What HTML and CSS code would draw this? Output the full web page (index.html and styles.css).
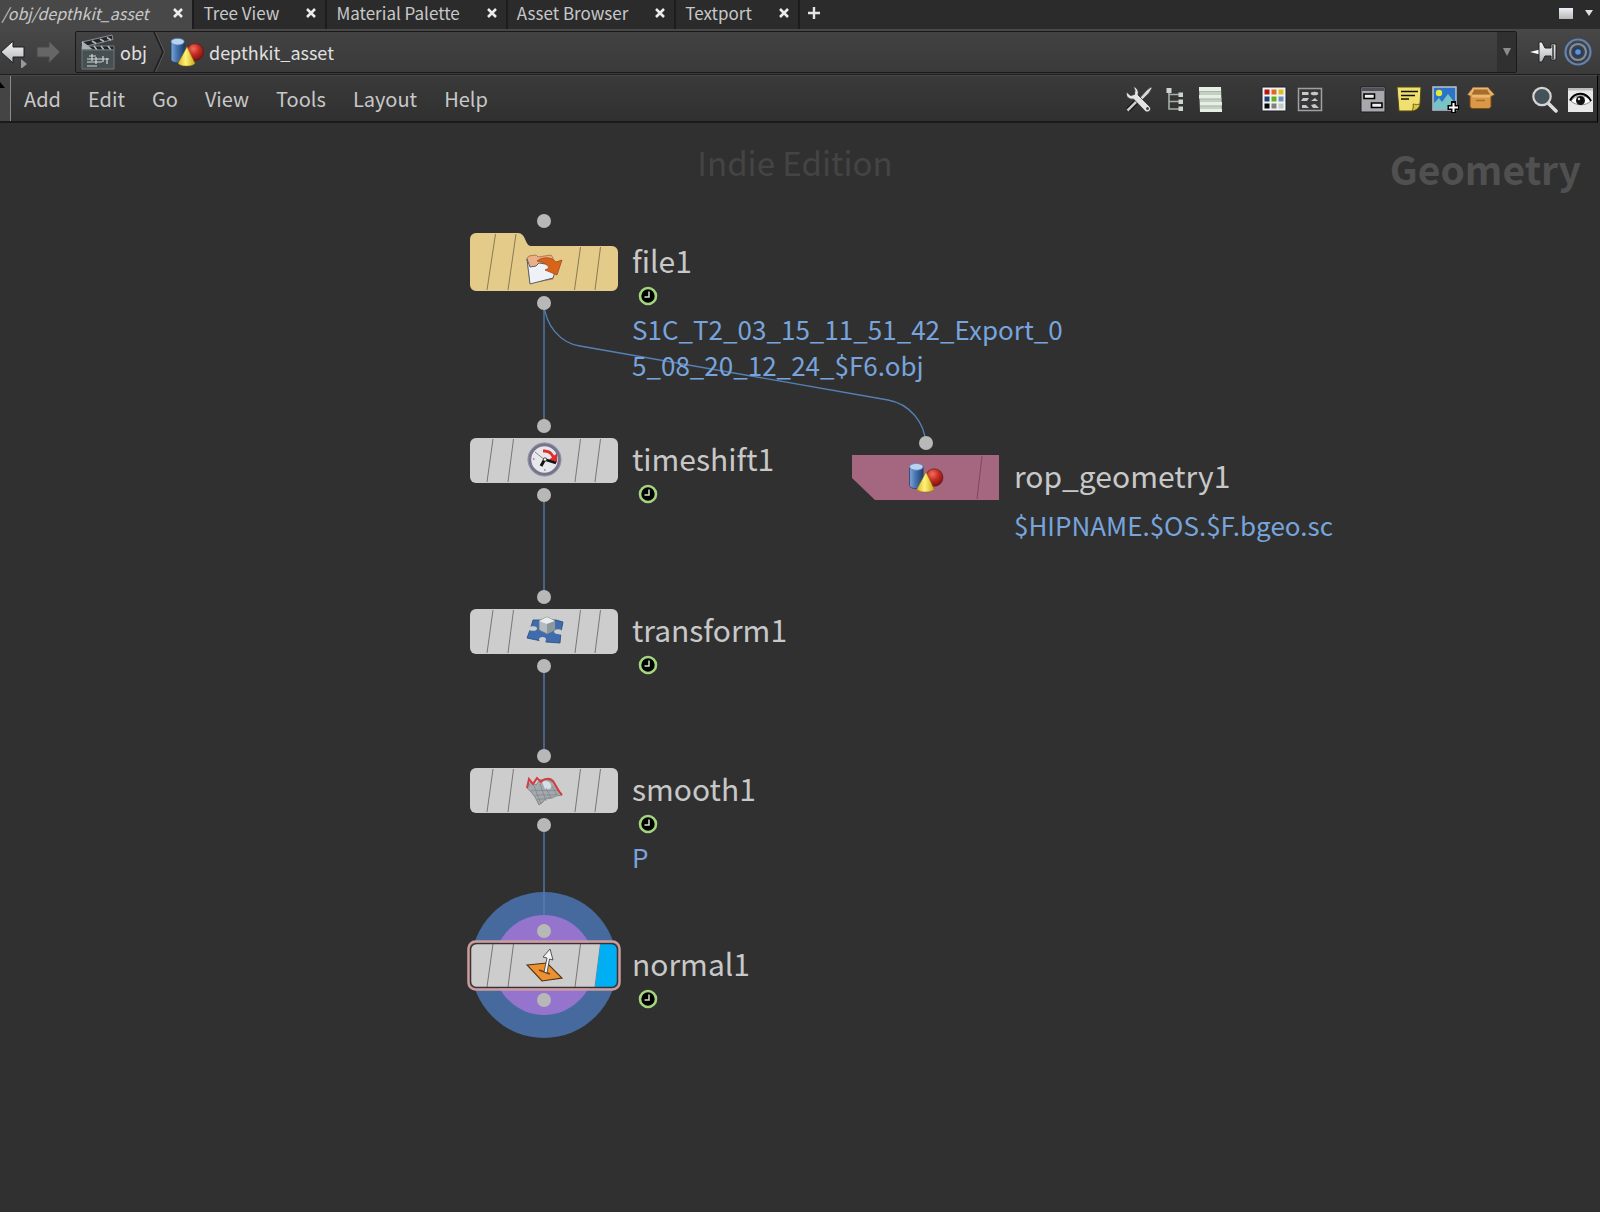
FILE: index.html
```html
<!DOCTYPE html>
<html lang="en">
<head>
    <meta charset="UTF-8">
    <title>/obj/depthkit_asset</title>
    <link rel="stylesheet" href="styles.css">
</head>

<body>
<!-- shared icons -->
<svg class="defs" aria-hidden="true">
    <defs>
        <linearGradient id="gBlue" x1="0" x2="1" y1="0" y2="0">
            <stop offset="0" stop-color="#7fa8d8"/>
            <stop offset=".4" stop-color="#4a78b4"/>
            <stop offset="1" stop-color="#1d3f70"/>
        </linearGradient>
        <linearGradient id="gYellow" x1="0" x2="1" y1="0" y2="0">
            <stop offset="0" stop-color="#d8b820"/>
            <stop offset=".45" stop-color="#fff27a"/>
            <stop offset="1" stop-color="#d0a818"/>
        </linearGradient>
        <radialGradient id="gRed" cx=".4" cy=".3" r=".7">
            <stop offset="0" stop-color="#f0705c"/>
            <stop offset=".5" stop-color="#c62c24"/>
            <stop offset="1" stop-color="#801410"/>
        </radialGradient>
        <linearGradient id="gSilver" x1="0" x2="0" y1="0" y2="1">
            <stop offset="0" stop-color="#f4f4f4"/>
            <stop offset="1" stop-color="#b4b8bc"/>
        </linearGradient>
        <symbol id="shapes" viewBox="0 0 36 32">
            <path d="M1 5v19c0 2 3 3.500 7 3.500s7-1.500 7-3.500V5z" fill="url(#gBlue)" stroke="#1f3c66" stroke-width=".8"/>
            <ellipse cx="8" cy="5" rx="7" ry="3.500" fill="#b9d2ee" stroke="#5b82b4" stroke-width=".8"/>
            <circle cx="26.500" cy="16" r="9" fill="url(#gRed)" stroke="#5c100c" stroke-width=".6"/>
            <path d="M18 10.500L8.500 28c2 4 16 4 18 0z" fill="url(#gYellow)" stroke="#8c7010" stroke-width=".6"/>
        </symbol>
        <symbol id="badge" viewBox="0 0 20 20">
            <circle cx="10" cy="10" r="8" fill="#000" stroke="#a6d47e" stroke-width="2.600"/>
            <path d="M11 5.500V11H6.500" fill="none" stroke="#d0e8c0" stroke-width="1.500"/>
        </symbol>
        <symbol id="cross" viewBox="0 0 10 10">
            <path d="M1 1l8 8M9 1l-8 8" stroke="#ececec" stroke-width="2.500"/>
        </symbol>
        <symbol id="plate" viewBox="0 0 148 45">
            <rect width="148" height="45" rx="6" fill="#cdcdcd"/>
            <path d="M23 1l-6 43M43.500 1l-5.500 43M110.500 1l-5.500 43M130.500 1l-5.500 43" stroke="#77777a" stroke-width="1"/>
        </symbol>
    </defs>
</svg>

<div class="pane">
    <div class="tabs">
        <div class="tab active">
            <a href="#network">/obj/depthkit_asset</a>
            <button class="close" aria-label="Close"><svg width="10" height="10"><use href="#cross"/></svg></button>
        </div>
        <div class="tab">
            <a href="#tree">Tree View</a>
            <button class="close" aria-label="Close"><svg width="10" height="10"><use href="#cross"/></svg></button>
        </div>
        <div class="tab">
            <a href="#material">Material Palette</a>
            <button class="close" aria-label="Close"><svg width="10" height="10"><use href="#cross"/></svg></button>
        </div>
        <div class="tab">
            <a href="#assets">Asset Browser</a>
            <button class="close" aria-label="Close"><svg width="10" height="10"><use href="#cross"/></svg></button>
        </div>
        <div class="tab">
            <a href="#textport">Textport</a>
            <button class="close" aria-label="Close"><svg width="10" height="10"><use href="#cross"/></svg></button>
        </div>
        <button class="new-tab" aria-label="New tab"><svg width="12" height="12"><path d="M6 0v12M0 6h12" stroke="#e4e4e4" stroke-width="2.400"/></svg></button>
        <div class="window-tools">
            <button aria-label="Maximize pane"><svg width="14" height="12"><path d="M0 0h14v12H0z" fill="url(#gSilver)"/><path d="M0 0h14" stroke="#28284a" stroke-width="2"/></svg></button>
            <button aria-label="Pane menu"><svg width="8" height="6"><path d="M0 0h8L4 6z" fill="#e0e0e0"/></svg></button>
        </div>
    </div>

    <div class="path-bar">
        <button class="nav" aria-label="Back">
            <svg width="28" height="32">
                <path d="M1 16L13 5v6h11v10H13v6z" fill="url(#gSilver)" stroke="#1c1c22" stroke-width="1"/>
                <path d="M21 23l6 5-6 5z" fill="#999"/>
            </svg>
        </button>
        <button class="nav" aria-label="Forward">
            <svg width="28" height="32"><path d="M26 16L15 5v6H3v10h12v6z" fill="#666" stroke="#484848" stroke-width="1"/></svg>
        </button>
        <div class="path">
            <a href="#obj" class="crumb">
                <svg width="34" height="36" viewBox="0 0 34 36">
                    <path d="M1 8L31 1l1 4.500L2 13z" fill="#22262a" stroke="#8a9094" stroke-width="1"/>
                    <path d="M11 7l4 2.500M19 5l4 2.500M26 3.500l4 2.500" stroke="#b8bcbc" stroke-width="1.500"/>
                    <path d="M1 12h32v4H1z" fill="#1e2224" stroke="#7a8084" stroke-width="1"/>
                    <path d="M13 12l3 4M20 12l3 4M27 12l3 4" stroke="#b8bcbc" stroke-width="1.500"/>
                    <path d="M1 7l11 8.500H1z" fill="#a8b0b4"/>
                    <path d="M1 16h32v19H1z" fill="#465052" stroke="#6c7678" stroke-width="1"/>
                    <path d="M6 25h22M6 28h15M6 32h10M11 20v7M15 23v7M22 22v6M26 24v6M8 22h7" stroke="#d0d6d6" stroke-width="1.200"/>
                </svg>
                obj
            </a>
            <svg class="chevron" width="12" height="40"><path d="M1 0l9 20-9 20" fill="none" stroke="#1c1c1c" stroke-width="1.500"/><path d="M2.500 0l9 20-9 20" fill="none" stroke="#585858" stroke-width="1"/></svg>
            <a href="#depthkit_asset" class="crumb">
                <svg width="34" height="30"><use href="#shapes"/></svg>
                depthkit_asset
            </a>
            <button class="path-menu" aria-label="Path history"><svg width="8" height="8"><path d="M0 0h8L4 8z" fill="#8c8c8c"/></svg></button>
        </div>
        <button class="nav" aria-label="Pin">
            <svg width="28" height="24">
                <path d="M0 12l10-2.500v5z" fill="#fff"/>
                <path d="M9 2h3l3 6h6V4h5v16h-5v-4h-6l-3 6H9z" fill="url(#gSilver)" stroke="#222" stroke-width="1"/>
                <path d="M23 5v14" stroke="#333" stroke-width="1.500"/>
            </svg>
        </button>
        <button class="nav" aria-label="Link pane">
            <svg width="28" height="28" fill="none">
                <circle cx="14" cy="14" r="12.500" stroke="#6284b4" stroke-width="2.200"/>
                <circle cx="14" cy="14" r="8" stroke="#7c8ea8" stroke-width="2.200"/>
                <circle cx="14" cy="14" r="5" fill="#263c60"/>
                <circle cx="14" cy="14" r="2.800" fill="#5c94dc"/>
            </svg>
        </button>
    </div>

    <div class="menu-bar">
        <button class="collapse" aria-label="Collapse"><svg width="5" height="6"><path d="M0 0l5 6H0z" fill="#000"/></svg></button>
        <nav class="menu">
            <button>Add</button>
            <button>Edit</button>
            <button>Go</button>
            <button>View</button>
            <button>Tools</button>
            <button>Layout</button>
            <button>Help</button>
        </nav>
        <div class="tools">
            <div class="group">
                <button aria-label="Tools">
                    <svg width="28" height="28" viewBox="0 0 28 28">
                        <path d="M3 25l10-10" stroke="#111" stroke-width="5"/>
                        <path d="M2.500 25.500L13 15" stroke="#c8c8c8" stroke-width="2.500"/>
                        <path d="M12 16L22 5l4-3 1 1-3 5-10 10z" fill="#d8d8d8" stroke="#444" stroke-width=".7"/>
                        <path d="M8 1.500a6.500 6.500 0 0 1 5 8.500l12 12c2 3-1.500 6-4.500 4.500L8.500 14C4 15 .5 11.500 1.500 7L5.500 10.500 9.500 9.500 10 5z" fill="#e4e4e4" stroke="#333" stroke-width=".8"/>
                        <circle cx="22.500" cy="23.500" r="1.500" fill="#444"/>
                    </svg>
                </button>
                <button aria-label="Tree">
                    <svg width="28" height="28" viewBox="0 0 28 28">
                        <path d="M8 6v18h10M8 9.500h10M8 16.500h10" fill="none" stroke="#a4b0a8" stroke-width="1.600"/>
                        <path d="M5.500 3h5v5h-5zM17.500 7.500h4.500v4.500h-4.500zM17.500 14.500h4.500v4.500h-4.500zM17.500 21.500h4.500v4.500h-4.500z" fill="#ccd6ce"/>
                    </svg>
                </button>
                <button aria-label="List">
                    <svg width="28" height="28" viewBox="0 0 28 28">
                        <path d="M2 2h22l1 25H3z" fill="#c4d0c4"/>
                        <path d="M2 2h22v4H2zM2 10h22v3.500H2zM3 17h22v3.500H3zM3 24h22v3H3z" fill="#e6eee6"/>
                        <path d="M2 6.500h22M3 14h22M3 21h22" stroke="#a4b2a4" stroke-width=".8"/>
                    </svg>
                </button>
            </div>
            <div class="group">
                <button aria-label="Colors">
                    <svg width="28" height="28" viewBox="0 0 28 28">
                        <path d="M2 2h24v24H2z" fill="#f2f2f2" stroke="#202030"/>
                        <path d="M4.500 4.500h5v5h-5z" fill="#b01818"/>
                        <path d="M11.500 4.500h5v5h-5z" fill="#dc6c18"/>
                        <path d="M18.500 4.500h5v5h-5z" fill="#dcc020"/>
                        <path d="M4.500 11.500h5v5h-5z" fill="#1c4078"/>
                        <path d="M11.500 11.500h5v5h-5z" fill="#60b020"/>
                        <path d="M18.500 11.500h5v5h-5z" fill="#7090c0"/>
                        <path d="M4.500 18.500h5v5h-5z" fill="#080808"/>
                        <path d="M11.500 18.500h5v5h-5z" fill="#808080"/>
                        <path d="M18.500 18.500h5v5h-5z" fill="#c0ccc0"/>
                    </svg>
                </button>
                <button aria-label="Node shapes">
                    <svg width="28" height="28" viewBox="0 0 28 28">
                        <path d="M2.500 3.500h23v22h-23z" fill="#38383a" stroke="#a0a0a0" stroke-width="1.500"/>
                        <path d="M6 7h6.500v3H6zM7 13h6l-2 3H5zM6 20h4l3 3H6zM15 16l4-3 3 3zM15 20l4-1 4 4h-6z" fill="#c8c8c8"/>
                        <ellipse cx="18.500" cy="8.500" rx="3.800" ry="1.800" fill="#c8c8c8"/>
                    </svg>
                </button>
            </div>
            <div class="group">
                <button aria-label="Network box">
                    <svg width="28" height="28" viewBox="0 0 28 28">
                        <path d="M2 2h24v25H2z" fill="#a8a8ac" stroke="#1c1c24" stroke-width="1"/>
                        <path d="M3 3h22v3H3z" fill="#50505a"/>
                        <path d="M5 9h10.500v4.500H5zM12.500 18H23v4.500H12.500z" fill="#eee" stroke="#000" stroke-width="1.600"/>
                    </svg>
                </button>
                <button aria-label="Sticky note">
                    <svg width="28" height="28" viewBox="0 0 28 28">
                        <path d="M2 2h24l-1 17-8 7H4z" fill="#f0e070" stroke="#504810" stroke-width="1"/>
                        <path d="M17 26c2-4 1-7 1-7s4 1 7 0c0 3-4 7-8 7z" fill="#d8c440" stroke="#504810" stroke-width=".8"/>
                        <path d="M6 6.500h17M6 10.500h14M6 14h8" stroke="#151505" stroke-width="1.700"/>
                    </svg>
                </button>
                <button aria-label="Background image">
                    <svg width="28" height="28" viewBox="0 0 28 28">
                        <path d="M2 2h23v23H2z" fill="#2c74c8" stroke="#b8c4d0" stroke-width="1.500"/>
                        <circle cx="8" cy="8" r="3.200" fill="#e4e838"/>
                        <path d="M3 24v-6l5-5 3 4 6-8 7 9v6z" fill="#78c4c4"/>
                        <path d="M22.500 16v12M16.500 22.500h11.500" stroke="#000" stroke-width="5"/>
                        <path d="M22.500 18v9M18 22.500h9" stroke="#fff" stroke-width="2"/>
                    </svg>
                </button>
                <button aria-label="Package">
                    <svg width="28" height="28" viewBox="0 0 28 28">
                        <path d="M3 10h21v12l-2 1.500H5L3 22z" fill="#d89848" stroke="#7c4c14" stroke-width="1"/>
                        <path d="M6 3h15l3 7H3z" fill="#a86c2c" stroke="#7c4c14" stroke-width="1"/>
                        <path d="M6 2.500L.5 9.500 4 11.500l3.500-6zM21 2.500l6.500 7-3.500 2-4-6z" fill="#e8b068" stroke="#8c5820" stroke-width=".7"/>
                        <path d="M6 2.500h15l1 2H5zM4 9.500h20l-1 3H5z" fill="#ecb870"/>
                        <path d="M9 15.500h9" stroke="#a86c28" stroke-width="1.500"/>
                    </svg>
                </button>
            </div>
            <div class="group">
                <button aria-label="Find">
                    <svg width="28" height="28" viewBox="0 0 28 28">
                        <path d="M18 18l8 8" stroke="#ddd" stroke-width="3.500" stroke-linecap="round"/>
                        <circle cx="12" cy="11.500" r="8.700" fill="#46525a" stroke="#d4d4d4" stroke-width="2.200"/>
                    </svg>
                </button>
                <button aria-label="Display options">
                    <svg width="28" height="28" viewBox="0 0 28 28">
                        <path d="M2 3h25v24H2z" fill="#e8e8e8"/>
                        <path d="M2 3h25v2.500H2z" fill="#bcbcbc"/>
                        <path d="M5 16c5-7 15-7 20 0-5 5-15 5-20 0z" fill="#fff" stroke="#888" stroke-width="1"/>
                        <path d="M4 15.500c5-9 16-9 21 .5" fill="none" stroke="#000" stroke-width="2"/>
                        <circle cx="14.500" cy="15.500" r="4.500" fill="#111"/>
                        <circle cx="13" cy="14" r="1.200" fill="#ddd"/>
                    </svg>
                </button>
            </div>
        </div>
    </div>

    <main class="canvas">
        <div class="watermark">Indie Edition</div>
        <div class="context">Geometry</div>

        <!-- wires and the display / render rings -->
        <svg class="wires" aria-hidden="true">
            <circle cx="544" cy="842" r="73" fill="#466a9e"/>
            <g fill="none" stroke="#5580b4" stroke-width="1.300">
                <path d="M544 180V303M544 372V474M544 543V633M544 702V800"/>
                <path d="M544 180C545 202 560 220 580 223L888 277C910 281 925 300 925.500 320"/>
            </g>
            <circle cx="544" cy="842" r="50" fill="#9474cc"/>
        </svg>

        <div class="node file">
            <div class="tile">
                <i class="port"></i>
                <svg width="148" height="58" viewBox="0 0 148 58">
                    <path d="M6 0H48c8 0 7 13 13 13H142a6 6 0 0 1 6 6V52a6 6 0 0 1-6 6H6a6 6 0 0 1-6-6V6a6 6 0 0 1 6-6z" fill="#e4cb8a"/>
                    <path d="M25.500 1L17 57M46 1L38 57M110.500 14l-6 43M130.500 14l-5.500 43" stroke="#8a7a50" stroke-width="1"/>
                    <path d="M57 25l2-2 7-1 2 2 13-2 2 3v21L60 50z" fill="#eab088" stroke="#a86840" stroke-width=".8"/>
                    <path d="M57 26l3 25 23-6 3-9-4-4-13-2-3 3-6 1z" fill="#eef2f6" stroke="#586068" stroke-width="1"/>
                    <path d="M67 28c6-5 15-4 19 1l6-2-5 15-12-5 4-2c-2-4-6-6-12-7z" fill="#d8641c" stroke="#9c4410" stroke-width=".7"/>
                </svg>
                <i class="port"></i>
            </div>
            <div class="info">
                <div class="name">file1</div>
                <svg class="badge"><use href="#badge"/></svg>
                <div class="attr">S1C_T2_03_15_11_51_42_Export_0<br>5_08_20_12_24_$F6.obj</div>
            </div>
        </div>

        <div class="node timeshift">
            <div class="tile">
                <i class="port"></i>
                <svg width="148" height="45" viewBox="0 0 148 45">
                    <use href="#plate"/>
                    <circle cx="74.500" cy="21.500" r="15" fill="#e8e8ec" stroke="#74748c" stroke-width="3.500"/>
                    <circle cx="74.500" cy="21.500" r="16.500" fill="none" stroke="#9898ac" stroke-width="1"/>
                    <path d="M65 14l10 8" stroke="#888" stroke-width="1"/>
                    <path d="M73 11.500c6 0 9 2 11 6l3-2v9l-8-3 3-2c-2-4-4-5-9-5z" fill="#e02c2c"/>
                    <path d="M75 21l-4 7" stroke="#111" stroke-width="3"/>
                    <path d="M75 21.500l11 3.500" stroke="#111" stroke-width="2.400"/>
                    <circle cx="75" cy="21.500" r="1.700" fill="#fff" stroke="#222" stroke-width=".8"/>
                    <path d="M74 32h1.500M63 21h1.500" stroke="#888" stroke-width="1.500"/>
                </svg>
                <i class="port"></i>
            </div>
            <div class="info">
                <div class="name">timeshift1</div>
                <svg class="badge"><use href="#badge"/></svg>
            </div>
        </div>

        <div class="node transform">
            <div class="tile">
                <i class="port"></i>
                <svg width="148" height="45" viewBox="0 0 148 45">
                    <use href="#plate"/>
                    <path d="M63 11h23l7 2-2 10-1 11-14-1-19-4 3-8z" fill="#3f6cac" stroke="#24487c" stroke-width=".8"/>
                    <ellipse cx="63" cy="19.500" rx="4" ry="2.300" fill="#cdcdcd"/>
                    <ellipse cx="88" cy="22.500" rx="4" ry="2.300" fill="#cdcdcd"/>
                    <ellipse cx="72.500" cy="30.500" rx="3.500" ry="2.500" fill="#cdcdcd"/>
                    <path d="M57 18.500l6-1v3l-5 1zM86 23l7-1-1 4-6-1.500zM71 31h4l1 4-6-1z" fill="#cdcdcd"/>
                    <path d="M69 12l8-4 8 4v9l-8 4-8-4z" fill="#b4bcc0" stroke="#687478" stroke-width=".8"/>
                    <path d="M69 12l8-4 8 4-8 3z" fill="#e8ecee"/>
                    <path d="M77 15l8-3v9l-8 4z" fill="#8c989e"/>
                </svg>
                <i class="port"></i>
            </div>
            <div class="info">
                <div class="name">transform1</div>
                <svg class="badge"><use href="#badge"/></svg>
            </div>
        </div>

        <div class="node smooth">
            <div class="tile">
                <i class="port"></i>
                <svg width="148" height="45" viewBox="0 0 148 45">
                    <use href="#plate"/>
                    <path d="M57 20l4-6 5 3 4-5 6-1 7 3 4 6 5 7-6 1-4 2-6 0-3 4-4 3-4-8-4-5z" fill="#a4a9ae" stroke="#787e84" stroke-width=".8"/>
                    <path d="M72 14c3-2 8-1 9 3s-3 5-6 4z" fill="#d4e0e8"/>
                    <path d="M61 23c6-2 14 1 27-1M65 28c6-3 14 1 22-2M67 32c5-2 9 0 14-2M64 18l7 18M70 16l6 17M76 20l5 10M82 18l5 9" fill="none" stroke="#7c8288" stroke-width=".7"/>
                    <path d="M57 20l2-9 4 5 4-6 4 4c3-4 9-4 12-1 3 4 4 9 9 14" fill="none" stroke="#d43c40" stroke-width="2"/>
                </svg>
                <i class="port"></i>
            </div>
            <div class="info">
                <div class="name">smooth1</div>
                <svg class="badge"><use href="#badge"/></svg>
                <div class="attr">P</div>
            </div>
        </div>

        <div class="node normal">
            <div class="tile">
                <i class="port"></i>
                <svg class="selected" width="148" height="45" viewBox="0 0 148 45">
                    <use href="#plate"/>
                    <path d="M130.500 0H142a6 6 0 0 1 6 6V39a6 6 0 0 1-6 6H125z" fill="#00aef4"/>
                    <path d="M57 22l20-2 15 15-20 3z" fill="#ec9034" stroke="#50300c" stroke-width="1.100"/>
                    <path d="M69 27l11 4" stroke="#70400c" stroke-width="1.500"/>
                    <path d="M74 29l3-14-4-1 7-8 3 11-3.500-1-2.500 14z" fill="#f4f4f4" stroke="#444" stroke-width=".9"/>
                    <rect x=".5" y=".5" width="147" height="44" rx="6" fill="none" stroke="#3a3030" stroke-width="1.500"/>
                    <rect x="-1.500" y="-1.500" width="151" height="48" rx="7" fill="none" stroke="#cc9c9e" stroke-width="2.500"/>
                </svg>
                <i class="port"></i>
            </div>
            <div class="info">
                <div class="name">normal1</div>
                <svg class="badge"><use href="#badge"/></svg>
            </div>
        </div>

        <div class="node rop">
            <div class="tile">
                <i class="port"></i>
                <svg width="148" height="45" viewBox="0 0 148 45">
                    <path d="M0 0h147v45H23L0 23z" fill="#a5667f"/>
                    <path d="M130 1l-5 43" stroke="#7c4860" stroke-width="1"/>
                    <use href="#shapes" x="56" y="7" width="36" height="31"/>
                </svg>
            </div>
            <div class="info">
                <div class="name">rop_geometry1</div>
                <div class="attr">$HIPNAME.$OS.$F.bgeo.sc</div>
            </div>
        </div>
    </main>
</div>
</body>
</html>
```
FILE: styles.css
```css
* {
    box-sizing: border-box;
}
body {
    margin: 0;
    background: #303030;
    color: #c8c8c8;
    font-family: "Noto Sans CJK SC", "Noto Sans", sans-serif;
    font-size: 20px;
}
button {
    margin: 0;
    padding: 0;
    border: 0;
    background: none;
    color: inherit;
    font: inherit;
}
a {
    color: inherit;
    text-decoration: none;
}
svg {
    display: block;
    flex: none;
}
.defs {
    position: absolute;
    width: 0;
    height: 0;
}
.pane {
    display: flex;
    flex-direction: column;
    min-height: 100vh;
}

/* tabs */
.tabs {
    display: flex;
    height: 29px;
    background: #2b2b2b;
    font-size: 17px;
    line-height: 26px;
}
.tab {
    display: flex;
    align-items: center;
    gap: 27px;
    padding: 0 9px 3px;
    border-right: 2px solid #1c1c1c;
}
.tab.active {
    gap: 25px;
    padding-left: 2px;
    background: #484848;
    font-size: 16px;
    font-style: italic;
}
.new-tab {
    padding: 0 8px 4px;
}
.window-tools {
    display: flex;
    align-items: center;
    gap: 12px;
    margin-left: auto;
    padding: 0 7px 3px 0;
}

/* path */
.path-bar {
    display: flex;
    align-items: center;
    gap: 6px;
    height: 46px;
    padding-right: 8px;
    background: linear-gradient(#484848, #3a3a3a);
    border-bottom: 1px solid #1e1e1e;
}
.path {
    display: flex;
    flex: 1;
    align-items: center;
    height: 42px;
    margin: 0 7px 0 7px;
    border: 1px solid #1a1a1a;
    border-radius: 2px;
    background: linear-gradient(#424242, #3a3a3a);
    color: #e0e0e0;
    font-size: 18px;
    line-height: 24px;
}
.crumb {
    display: flex;
    align-items: center;
    gap: 5px;
    padding: 0 6px 0 5px;
}
.path-menu {
    display: flex;
    align-items: center;
    justify-content: center;
    width: 19px;
    height: 40px;
    margin-left: auto;
    background: #303030;
}

/* menu */
.menu-bar {
    display: flex;
    align-items: center;
    height: 48px;
    margin-right: 2px;
    padding-right: 3px;
    border-top: 1px solid #484848;
    border-right: 1px solid #000;
    border-bottom: 2px solid #1a1a1a;
    background: linear-gradient(#3a3a3a, #303030);
}
.collapse {
    display: flex;
    width: 11px;
    height: 45px;
    padding-top: 6px;
    border-right: 1px solid #8a8a8a;
    background: #444;
}
.menu {
    display: flex;
    gap: 27px;
    padding-left: 13px;
}
.tools {
    display: flex;
    gap: 35px;
    margin-left: auto;
}
.group {
    display: flex;
    gap: 8px;
}

/* network */
.canvas {
    position: relative;
    flex: 1;
    overflow: hidden;
}
.watermark {
    padding-top: 15px;
    padding-right: 10px;
    color: #444;
    font-size: 33px;
    line-height: 48px;
    text-align: center;
}
.context {
    position: absolute;
    top: 15px;
    right: 19px;
    color: #505050;
    font-size: 39px;
    font-weight: bold;
    line-height: 60px;
}
.wires {
    position: absolute;
    top: 0;
    left: 0;
    width: 100%;
    height: 100%;
}
.node {
    position: absolute;
    left: 470px;
    display: flex;
    gap: 14px;
}
.tile {
    display: flex;
    flex-direction: column;
    align-items: center;
    gap: 5px;
}
.port {
    width: 14px;
    height: 14px;
    border-radius: 50%;
    background: #b8b8b8;
}
.selected {
    overflow: visible;
}
.info {
    padding-top: 17px;
    white-space: nowrap;
}
.name {
    font-size: 30px;
    line-height: 44px;
}
.badge {
    width: 20px;
    height: 20px;
    margin: 4px 0 0 6px;
}
.attr {
    margin-top: 5px;
    color: #78a4dc;
    font-size: 26px;
    line-height: 36px;
}
.name + .attr {
    margin-top: 10px;
}
.file {
    top: 91px;
}
.file .info {
    padding-top: 24px;
}
.timeshift {
    top: 296px;
}
.transform {
    top: 467px;
}
.smooth {
    top: 626px;
}
.normal {
    top: 801px;
}
.rop {
    top: 313px;
    left: 852px;
}
```
